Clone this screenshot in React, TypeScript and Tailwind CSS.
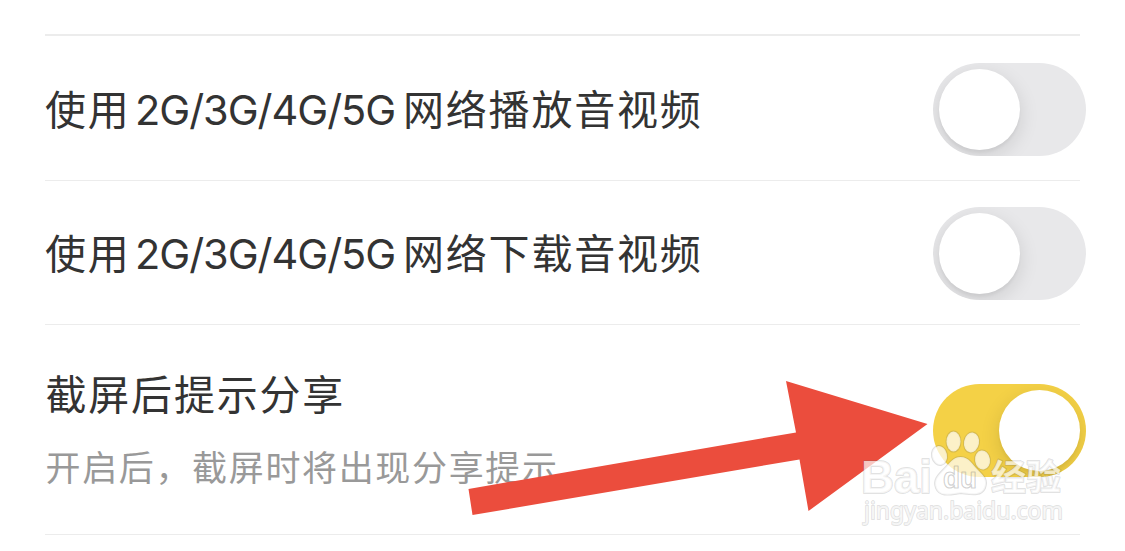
import React from "react";

function Toggle({ on = false }: { on?: boolean }) {
  return (
    <div
      role="switch"
      aria-checked={on}
      className={
        "mt-[2px] -mr-1.5 flex h-[93px] w-[153px] shrink-0 items-center overflow-hidden rounded-full px-[6px] " +
        (on ? "justify-end bg-[#f4d146]" : "justify-start bg-[#e8e8ea]")
      }
    >
      <div className="size-[81px] rounded-full bg-white shadow-[0_6px_20px_rgba(0,0,0,0.12),0_3px_3px_rgba(0,0,0,0.04)]" />
    </div>
  );
}

function NetworkRow({ action }: { action: string }) {
  return (
    <div className="flex h-[144px] items-center justify-between border-b border-[#ececec]">
      <div className="flex items-baseline pt-[3px] text-[41px] leading-[60px] tracking-[1.8px] whitespace-nowrap text-[#333333]">
        <span className="w-[90px]">使用</span>
        <span className="w-[268px] font-['Inter'] text-[41.5px] tracking-[-1.05px]">2G/3G/4G/5G</span>
        <span>网络{action}音视频</span>
      </div>
      <Toggle />
    </div>
  );
}

function Arrow() {
  return (
    <svg className="pointer-events-none absolute top-0 left-0" width="1125" height="551" viewBox="0 0 1125 551">
      <path d="M468.5 489 796 432.5 786 381 927.5 424 808.5 511 799.5 459.5 472.5 515Z" fill="#eb4d3d" />
    </svg>
  );
}

function Watermark() {
  return (
    <svg className="pointer-events-none absolute top-[420px] left-[855px]" width="220" height="110" viewBox="855 420 220 110">
      <g
        fill="#fff"
        fillOpacity="0.7"
        stroke="#666"
        strokeOpacity="0.2"
        strokeWidth="2"
        strokeLinejoin="round"
        paintOrder="stroke"
      >
        <text x="861" y="493" fontFamily="Liberation Sans" fontWeight="700" fontSize="46" textLength="71" lengthAdjust="spacingAndGlyphs">
          Bai
        </text>
        <ellipse cx="939.5" cy="455.5" rx="7.5" ry="9.5" transform="rotate(-12 939.5 455.5)" />
        <ellipse cx="953.5" cy="441.5" rx="7" ry="10" />
        <ellipse cx="971.5" cy="442.5" rx="7.5" ry="10" transform="rotate(10 971.5 442.5)" />
        <ellipse cx="982.5" cy="460" rx="7.5" ry="9.5" transform="rotate(-8 982.5 460)" />
        <path d="M960.5 457C969 457 972 464 978 470C984 476 988 480 985 488C981 497 970 494 961 493C952 494 940 498 936 488C933 480 938 475 944 469C950 463 953 457 960.5 457Z" />
        <text
          x="943"
          y="488"
          fontFamily="Liberation Sans"
          fontWeight="700"
          fontSize="29"
          textLength="34"
          lengthAdjust="spacingAndGlyphs"
          fill="none"
          strokeWidth="1.2"
          strokeOpacity="0.3"
        >
          du
        </text>
        <text x="991" y="490" fontFamily="Noto Sans CJK SC" fontWeight="700" fontSize="35" textLength="70" lengthAdjust="spacingAndGlyphs">
          经验
        </text>
        <text x="864" y="519" fontFamily="Noto Sans" fontWeight="400" fontSize="23" textLength="199" lengthAdjust="spacingAndGlyphs" strokeWidth="1.8">
          jingyan.baidu.com
        </text>
      </g>
    </svg>
  );
}

export default function App() {
  return (
    <main className="relative h-[551px] w-[1125px] overflow-hidden bg-white pt-[34px] pr-[45px] pl-[45px] font-['Inter','Noto_Sans_CJK_SC',sans-serif]">
      <div className="h-[3px] border-t-2 border-[#ececec]" />
      <NetworkRow action="播放" />
      <NetworkRow action="下载" />
      <div className="flex h-[210px] items-center justify-between border-b border-[#ececec]">
        <div className="pt-[2px] pl-[0.5px] whitespace-nowrap">
          <div className="-mt-px text-[41px] leading-[60px] tracking-[1.8px] text-[#333333]">截屏后提示分享</div>
          <div className="mt-[15px] text-[35px] leading-[56px] tracking-[1.65px] text-[#999999]">开启后，截屏时将出现分享提示</div>
        </div>
        <Toggle on />
      </div>
      <Arrow />
      <Watermark />
    </main>
  );
}
